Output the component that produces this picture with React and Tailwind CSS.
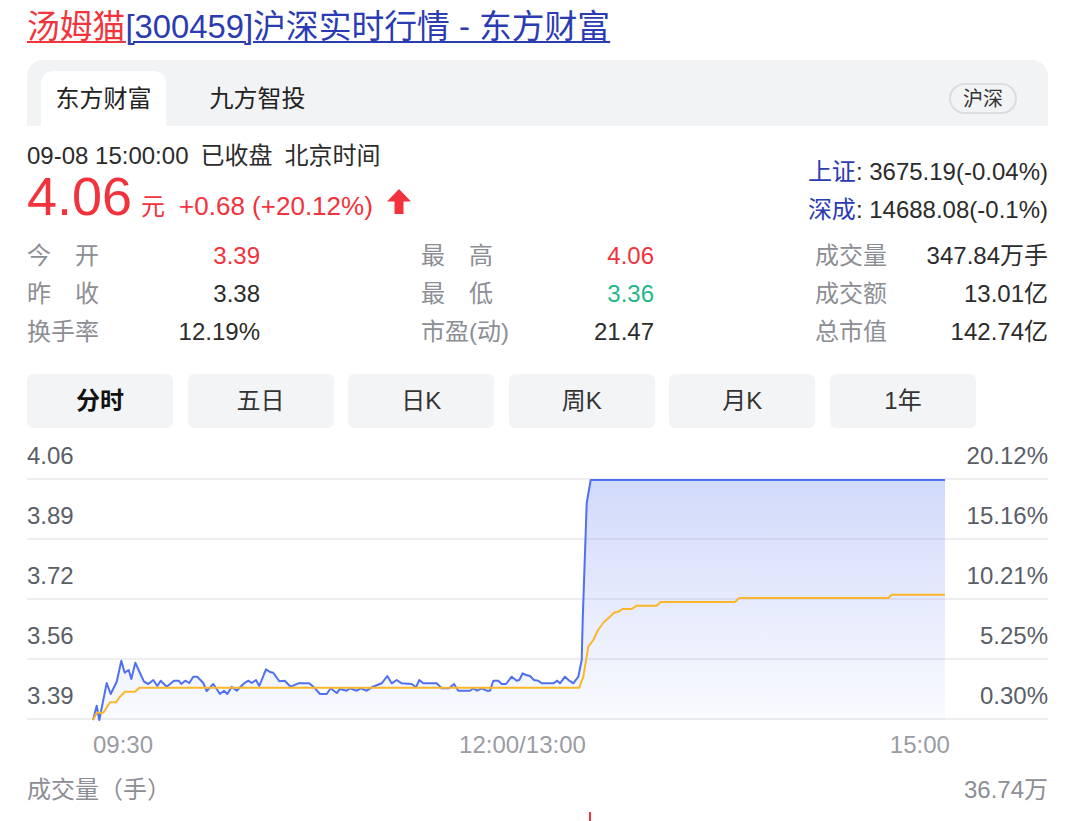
import React from "react";

const blueLine = [
  [93, 720], [96.7, 705.7], [99.3, 720], [106.7, 683], [110.7, 694], [116.7, 681.7],
  [121.3, 660.7], [124.7, 672.7], [128.7, 670], [131.3, 679], [135.3, 662.7], [140, 673],
  [144, 681.7], [148.3, 684], [153.3, 680], [157.3, 686], [160.7, 680.7], [166.7, 686.7],
  [174, 680.7], [178.7, 680.7], [181.3, 684], [185.3, 680.7], [189.3, 683], [193.3, 676.7],
  [197.3, 676.7], [203.3, 683], [206.7, 691], [213.3, 684], [220, 694], [224, 690.7],
  [227.3, 694], [231.7, 686.7], [236.7, 690.7], [243.3, 684], [248.3, 680.7], [251.7, 683],
  [256, 680], [259.3, 686], [266, 669.3], [270, 672], [273.3, 672.7], [279.3, 681.3],
  [284.7, 680.7], [290.7, 686.7], [298.3, 683.3], [309.3, 683.3], [315, 688.3], [320, 694],
  [326.7, 694], [330.7, 688.3], [336.7, 693], [340, 689], [346.7, 690.7], [350, 688.3],
  [356.7, 690.7], [360.7, 688.3], [366.7, 690.7], [371.7, 687.3], [381.7, 683.3], [387.3, 676],
  [391.7, 683.3], [396.7, 680], [401.7, 683.3], [411.7, 684], [416, 687.3], [419.3, 680],
  [423.3, 683.3], [436.7, 683.3], [441.7, 688.3], [449, 688.3], [454, 684], [458.3, 690.7],
  [470, 690.7], [473.3, 688.3], [477.3, 690.7], [481.7, 688.3], [486.7, 690.7], [490, 690.7],
  [493.3, 680.7], [498.3, 680.7], [501.7, 684], [506, 684], [511.7, 676.7], [516.7, 680.7],
  [519.3, 680], [522.7, 673.3], [526, 675], [530, 676], [534, 680], [538.3, 680.7],
  [541.7, 683.3], [553.3, 683.3], [557.3, 680.7], [560, 683.3], [565, 676.7], [569.3, 680.7],
  [573.3, 683.3], [578.3, 676.7], [581.7, 660], [582.7, 620], [586.7, 503], [590.7, 480],
  [945, 480],
];

const avgLine = [
  [93, 720], [96.7, 712.7], [103.3, 712.7], [110, 702.3], [116, 702.3], [120, 696.7],
  [125, 691.7], [135, 691.7], [139.3, 687.7], [579.3, 687.7], [583.3, 676.7], [588.3, 646.7],
  [593.3, 640], [598, 630], [604, 622], [610, 616.7], [614, 612.7], [618.3, 611.7],
  [622.7, 609], [631.7, 609], [636.7, 605.7], [656.7, 605.7], [660.7, 602], [735, 602],
  [739.3, 598], [888.3, 598], [891.7, 594.7], [945, 594.7],
];

const toPts = (arr) => arr.map(([x, y]) => `${x},${y}`).join(" ");

const stats = [
  [["今", "开"], "3.39", "text-[#f2323c]"],
  [["最", "高"], "4.06", "text-[#f2323c]"],
  [["成交量"], "347.84万手", "text-[#2b2b2b]"],
  [["昨", "收"], "3.38", "text-[#2b2b2b]"],
  [["最", "低"], "3.36", "text-[#1fb78a]"],
  [["成交额"], "13.01亿", "text-[#2b2b2b]"],
  [["换手率"], "12.19%", "text-[#2b2b2b]"],
  [["市盈(动)"], "21.47", "text-[#2b2b2b]"],
  [["总市值"], "142.74亿", "text-[#2b2b2b]"],
];

const periods = ["分时", "五日", "日K", "周K", "月K", "1年"];

const rows = [
  ["4.06", "20.12%", "h-[50px]"],
  ["3.89", "15.16%", "h-[60px]"],
  ["3.72", "10.21%", "h-[60px]"],
  ["3.56", "5.25%", "h-[60px]"],
  ["3.39", "0.30%", "h-[60px]"],
];

const App = () => {
  return (
    <div className="w-[1080px] h-[821px] overflow-hidden bg-white font-['Liberation_Sans','Noto_Sans_CJK_SC',sans-serif] text-[#2b2b2b]">
      <div className="ml-[27px] w-[1021px]">
        {/* title */}
        <div className="h-[60px] pt-[7px] text-[32.8px] leading-[40px] whitespace-nowrap">
          <span className="text-[#f2343c] underline decoration-2 underline-offset-[3px]">汤姆猫</span>
          <span className="text-[#2b3cb2] underline decoration-2 underline-offset-[3px]">
            [300459]沪深实时行情 - 东方财富
          </span>
        </div>

        {/* source tabs */}
        <div className="h-[66px] bg-[#f2f3f5] rounded-t-[16px] flex pt-[11px] pl-[14px] pr-[31px]">
          <div className="w-[125px] bg-white rounded-t-[12px] flex items-center justify-center text-[24px] text-[#222]">
            东方财富
          </div>
          <div className="w-[125px] ml-[29px] flex items-center justify-center text-[24px] text-[#222]">
            九方智投
          </div>
          <div className="ml-auto self-center h-[31px] w-[68px] rounded-full border-2 border-[#dcdde0] flex items-center justify-center text-[20px] text-[#333]">
            沪深
          </div>
        </div>

        {/* quote header */}
        <div className="h-[111px] flex justify-between">
          <div className="pt-[15px]">
            <div className="h-[30px] leading-[30px] text-[24px] whitespace-nowrap flex gap-[12px]">
              <span>09-08 15:00:00</span>
              <span>已收盘</span>
              <span>北京时间</span>
            </div>
            <div className="h-[50px] flex items-baseline text-[#f2323c] whitespace-nowrap">
              <span className="text-[54px] leading-[50px]">4.06</span>
              <span className="text-[24px] ml-[9px]">元</span>
              <span className="text-[26px] ml-[14px]">+0.68 (+20.12%)</span>
              <svg className="ml-[14px] self-center mt-[10px]" width="24" height="25" viewBox="0 0 24 25">
                <polygon points="12,0 24,12.5 16.5,12.5 16.5,25 7.5,25 7.5,12.5 0,12.5" fill="#f2323c" />
              </svg>
            </div>
          </div>
          <div className="pt-[27px] text-[24px] text-right whitespace-nowrap">
            <div className="h-[38px] leading-[38px]">
              <span className="text-[#2b3cb2]">上证</span>: 3675.19(-0.04%)
            </div>
            <div className="h-[38px] leading-[38px]">
              <span className="text-[#2b3cb2]">深成</span>: 14688.08(-0.1%)
            </div>
          </div>
        </div>

        {/* stats */}
        <div className="grid grid-cols-3 gap-x-[161px] text-[24px]">
          {stats.map(([label, value, color], i) => (
            <div key={i} className="h-[38px] flex items-center justify-between">
              {label.length === 2 ? (
                <span className="w-[72px] flex justify-between text-[#8c8e94]">
                  <span>{label[0]}</span>
                  <span>{label[1]}</span>
                </span>
              ) : (
                <span className="text-[#8c8e94]">{label[0]}</span>
              )}
              <span className={color}>{value}</span>
            </div>
          ))}
        </div>

        {/* periods */}
        <div className="mt-[23px] flex gap-[14.6px]">
          {periods.map((p, i) => (
            <div
              key={p}
              className={
                "w-[146px] h-[54px] rounded-[6px] bg-[#f3f4f6] flex items-center justify-center text-[24px] " +
                (i === 0 ? "font-bold text-[#111]" : "text-[#333]")
              }
            >
              {p}
            </div>
          ))}
        </div>

        {/* chart */}
        <div className="relative mt-[2px]">
          {rows.map(([l, r, h]) => (
            <div key={l} className={h + " flex justify-between items-end pb-[9px] border-b-2 border-[#eeeeee] text-[24px] leading-[26px] text-[#5a5e66]"}>
              <span>{l}</span>
              <span>{r}</span>
            </div>
          ))}
          <svg
            className="absolute left-0 top-0"
            width="1021"
            height="292"
            viewBox="27 430 1021 292"
          >
            <defs>
              <linearGradient id="fillBlue" x1="0" y1="480" x2="0" y2="720" gradientUnits="userSpaceOnUse">
                <stop offset="0" stopColor="#5b79ee" stopOpacity="0.28" />
                <stop offset="1" stopColor="#5b79ee" stopOpacity="0.03" />
              </linearGradient>
            </defs>
            <polygon points={toPts([...blueLine, [945, 720], [93, 720]])} fill="url(#fillBlue)" />
            <polyline points={toPts(blueLine)} fill="none" stroke="#4f70f0" strokeWidth="2" strokeLinejoin="round" />
            <polyline points={toPts(avgLine)} fill="none" stroke="#fbb62a" strokeWidth="2" strokeLinejoin="round" />
          </svg>
        </div>

        {/* time axis */}
        <div className="h-[50px] flex items-center text-[24px] text-[#9a9ca3] whitespace-nowrap">
          <span className="ml-[66px]">09:30</span>
          <span className="ml-[306px]">12:00/13:00</span>
          <span className="ml-[304px]">15:00</span>
        </div>

        {/* volume */}
        <div className="h-[40px] flex items-center justify-between text-[24px] text-[#8c8e94]">
          <span>成交量（手）</span>
          <span>36.74万</span>
        </div>
        <div className="mt-[2px] ml-[562px] w-[2px] h-[10px] bg-[#f2323c]" />
      </div>
    </div>
  );
};

export default App;
